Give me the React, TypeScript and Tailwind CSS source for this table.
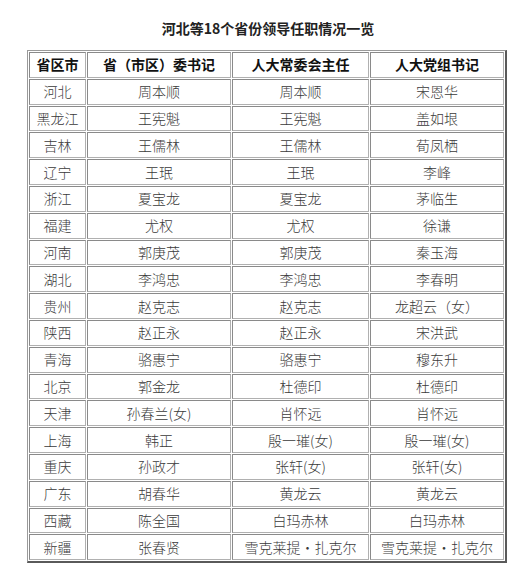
import React from "react";

const rows: [string, string, string, string][] = [
  ["河北", "周本顺", "周本顺", "宋恩华"],
  ["黑龙江", "王宪魁", "王宪魁", "盖如垠"],
  ["吉林", "王儒林", "王儒林", "荀凤栖"],
  ["辽宁", "王珉", "王珉", "李峰"],
  ["浙江", "夏宝龙", "夏宝龙", "茅临生"],
  ["福建", "尤权", "尤权", "徐谦"],
  ["河南", "郭庚茂", "郭庚茂", "秦玉海"],
  ["湖北", "李鸿忠", "李鸿忠", "李春明"],
  ["贵州", "赵克志", "赵克志", "龙超云（女）"],
  ["陕西", "赵正永", "赵正永", "宋洪武"],
  ["青海", "骆惠宁", "骆惠宁", "穆东升"],
  ["北京", "郭金龙", "杜德印", "杜德印"],
  ["天津", "孙春兰(女)", "肖怀远", "肖怀远"],
  ["上海", "韩正", "殷一璀(女)", "殷一璀(女)"],
  ["重庆", "孙政才", "张轩(女)", "张轩(女)"],
  ["广东", "胡春华", "黄龙云", "黄龙云"],
  ["西藏", "陈全国", "白玛赤林", "白玛赤林"],
  ["新疆", "张春贤", "雪克莱提・扎克尔", "雪克莱提・扎克尔"],
];

const font = { fontFamily: '"Noto Sans CJK SC", "Noto Sans", sans-serif' };

export default function App() {
  const cell =
    "border border-t-[#8a8a8a] border-l-[#8a8a8a] border-r-[#b0b0b0] border-b-[#b0b0b0] text-center align-middle p-0";
  return (
    <div className="w-[521px] h-[570px] bg-white" style={font}>
      <div className="ml-[27px] w-[480px] pt-[18px]">
        <div className="text-center text-[14px] leading-[20px] font-bold text-[#222] pl-[2px]">
          河北等18个省份领导任职情况一览
        </div>
        <table className="mt-[12px] border-separate border-spacing-[1px] border border-t-[#9a9a9a] border-l-[#9a9a9a] border-r-[#5a5a5a] border-b-[#5a5a5a] border-r-2 border-b-2">
          <thead>
            <tr className="h-[25.8px]">
              <th className={`${cell} w-[57px] font-bold text-[14px] text-[#111]`}>省区市</th>
              <th className={`${cell} w-[144px] font-bold text-[14px] text-[#111]`}>省（市区）委书记</th>
              <th className={`${cell} w-[137px] font-bold text-[14px] text-[#111]`}>人大常委会主任</th>
              <th className={`${cell} w-[134px] font-bold text-[14px] text-[#111]`}>人大党组书记</th>
            </tr>
          </thead>
          <tbody>
            {rows.map((r, i) => (
              <tr key={i} className="h-[25.8px]">
                {r.map((c, j) => (
                  <td key={j} className={`${cell} text-[14px] text-[#3a3a3a] font-light`}>
                    {c}
                  </td>
                ))}
              </tr>
            ))}
          </tbody>
        </table>
      </div>
    </div>
  );
}
